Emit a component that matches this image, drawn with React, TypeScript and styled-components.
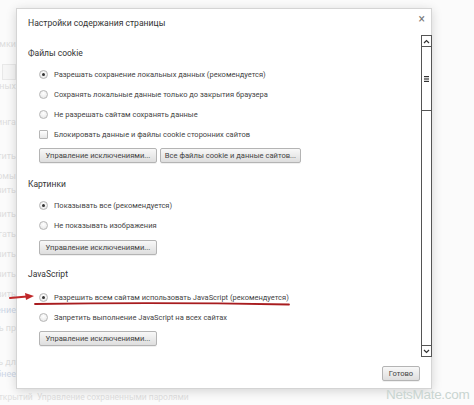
import React from "react";
import styled, { createGlobalStyle } from "styled-components";

const GlobalStyle = createGlobalStyle`
  html, body {
    margin: 0;
    padding: 0;
    background: #fbfbfb;
    font-family: Roboto, "Noto Sans", sans-serif;
  }
`;

const Page = styled.div`
  position: relative;
  width: 474px;
  height: 405px;
  overflow: hidden;
  background: #fbfbfb;
`;

// faded settings page behind the dialog, only its right edge peeks out
const BackPage = styled.div`
  width: 16px;
  overflow: hidden;
  display: flex;
  flex-direction: column;
  align-items: flex-end;
  padding-top: 30px;
`;

const BackLine = styled.div<{ $top: number; $blue?: boolean }>`
  margin-top: ${({ $top }) => $top}px;
  font-size: 9px;
  line-height: 12px;
  color: ${({ $blue }) => ($blue ? "#cdd6e6" : "#dedede")};
  white-space: nowrap;
`;

const BackBox = styled.div`
  margin-top: 14px;
  display: flex;
  gap: 2px;
  span {
    display: block;
    width: 12px;
    height: 14px;
    border: 1px solid #e8e8e8;
    background: #f6f6f6;
  }
`;

const BottomText = styled.div`
  position: absolute;
  left: -6px;
  top: 392px;
  font-size: 8.5px;
  color: #e0e0e0;
  white-space: nowrap;
`;

const Watermark = styled.div`
  position: absolute;
  left: 386px;
  top: 387px;
  font-family: "Liberation Sans", sans-serif;
  font-size: 13.5px;
  letter-spacing: -0.3px;
  color: #c9d5d1;
  white-space: nowrap;
`;

const Dialog = styled.div`
  position: absolute;
  left: 16px;
  top: 8px;
  width: 416px;
  height: 381px;
  box-sizing: border-box;
  background: #ffffff;
  border: 1px solid #d4d4d4;
  box-shadow: 0 2px 10px rgba(0, 0, 0, 0.16);
  display: flex;
  flex-direction: column;
`;

const Header = styled.div`
  height: 26px;
  display: flex;
  align-items: center;
  justify-content: space-between;
  padding: 0 6px 0 11px;
`;

const Title = styled.div`
  font-size: 8.6px;
  color: #333;
  padding-top: 1px;
`;

const Close = styled.div`
  font-size: 12px;
  color: #7a7a7a;
  line-height: 10px;
  margin-top: -6px;
`;

const Body = styled.div`
  display: flex;
  height: 322px;
`;

const Content = styled.div`
  flex: 1;
  padding: 11px 0 0 11px;
`;

const SectionTitle = styled.div<{ $mt?: number }>`
  margin-top: ${({ $mt }) => $mt || 0}px;
  font-size: 8.5px;
  line-height: 14px;
  color: #333;
`;

const Option = styled.div<{ $mt?: number }>`
  margin-top: ${({ $mt }) => $mt || 0}px;
  height: 20px;
  display: flex;
  align-items: center;
  padding-left: 11px;
  font-size: 7.5px;
  color: #444;
  white-space: nowrap;
`;

const Radio = styled.span<{ $on?: boolean }>`
  width: 9px;
  height: 9px;
  box-sizing: border-box;
  border-radius: 50%;
  border: 1px solid #b6b6b6;
  background: radial-gradient(circle at 50% 35%, #ffffff, #e3e3e3);
  margin-right: 6px;
  display: flex;
  align-items: center;
  justify-content: center;
  &::after {
    content: "";
    display: ${({ $on }) => ($on ? "block" : "none")};
    width: 3px;
    height: 3px;
    border-radius: 50%;
    background: #333;
  }
`;

const Check = styled.span`
  width: 9px;
  height: 9px;
  box-sizing: border-box;
  border: 1px solid #b6b6b6;
  border-radius: 1px;
  background: linear-gradient(#ffffff, #e6e6e6);
  margin-right: 6px;
`;

const Buttons = styled.div<{ $mt?: number }>`
  margin-top: ${({ $mt }) => $mt || 0}px;
  padding-left: 11px;
  display: flex;
  gap: 3px;
`;

const Button = styled.div<{ $w: number }>`
  width: ${({ $w }) => $w}px;
  height: 15px;
  box-sizing: border-box;
  border: 1px solid #b4b4b4;
  border-radius: 2px;
  background: linear-gradient(#f8f8f8, #dedede);
  box-shadow: 0 1px 0 rgba(0, 0, 0, 0.06);
  font-size: 7.6px;
  color: #444;
  display: flex;
  align-items: center;
  justify-content: center;
  white-space: nowrap;
`;

const Scrollbar = styled.div`
  width: 11px;
  margin-right: -1px;
  box-sizing: border-box;
  border: 1px solid #555;
  display: flex;
  flex-direction: column;
  background: #fff;
`;

const Arrow = styled.div`
  height: 10px;
  display: flex;
  align-items: center;
  justify-content: center;
`;

const Thumb = styled.div`
  height: 63px;
  border-top: 1px solid #555;
  border-bottom: 1px solid #555;
  display: flex;
  align-items: center;
  justify-content: center;
`;

const Track = styled.div`
  flex: 1;
  border-bottom: 1px solid #555;
`;

const Footer = styled.div`
  flex: 1;
  display: flex;
  justify-content: flex-end;
  align-items: flex-start;
  padding: 9px 11px 0 0;
`;

const Annotation = styled.svg`
  position: absolute;
  left: 0;
  top: 0;
  pointer-events: none;
`;

const backLines: { top: number; text: string; blue?: boolean }[] = [
  { top: 0, text: "Настройки данных" },
  { top: 24, text: "Защита от фишинга" },
  { top: 22, text: "Очистить" },
  { top: 8, text: "Пароли и формы" },
  { top: 2, text: "Отключить" },
  { top: 12, text: "Включить" },
  { top: 8, text: "Предлагать" },
  { top: 8, text: "Разрешить" },
  { top: 8, text: "Отключить" },
  { top: 8, text: "Отправить" },
  { top: 4, text: "Управление", blue: true },
  { top: 6, text: "Разрешить пр" },
  { top: 22, text: "Включить дл" },
  { top: 0, text: "Подробнее", blue: true },
];

const App = () => {
  return (
    <Page>
      <GlobalStyle />
      <BackPage>
        <BackLine $top={8}>Снимки</BackLine>
        <BackBox>
          <span />
          <span />
        </BackBox>
        {backLines.map((l, i) => (
          <BackLine key={i} $top={l.top} $blue={l.blue}>
            {l.text}
          </BackLine>
        ))}
      </BackPage>
      <BottomText>открытий &nbsp;Управление сохраненными паролями</BottomText>

      <Dialog>
        <Header>
          <Title>Настройки содержания страницы</Title>
          <Close>×</Close>
        </Header>
        <Body>
          <Content>
            <SectionTitle>Файлы cookie</SectionTitle>
            <Option $mt={4}>
              <Radio $on />
              Разрешать сохранение локальных данных (рекомендуется)
            </Option>
            <Option>
              <Radio />
              Сохранять локальные данные только до закрытия браузера
            </Option>
            <Option>
              <Radio />
              Не разрешать сайтам сохранять данные
            </Option>
            <Option>
              <Check />
              Блокировать данные и файлы cookie сторонних сайтов
            </Option>
            <Buttons $mt={4}>
              <Button $w={118}>Управление исключениями...</Button>
              <Button $w={141}>Все файлы cookie и данные сайтов...</Button>
            </Buttons>

            <SectionTitle $mt={14}>Картинки</SectionTitle>
            <Option $mt={4}>
              <Radio $on />
              Показывать все (рекомендуется)
            </Option>
            <Option>
              <Radio />
              Не показывать изображения
            </Option>
            <Buttons $mt={5}>
              <Button $w={118}>Управление исключениями...</Button>
            </Buttons>

            <SectionTitle $mt={12}>JavaScript</SectionTitle>
            <Option $mt={6}>
              <Radio $on />
              Разрешить всем сайтам использовать JavaScript (рекомендуется)
            </Option>
            <Option>
              <Radio />
              Запретить выполнение JavaScript на всех сайтах
            </Option>
            <Buttons $mt={4}>
              <Button $w={118}>Управление исключениями...</Button>
            </Buttons>
          </Content>
          <Scrollbar>
            <Arrow>
              <svg width="7" height="5" viewBox="0 0 7 5">
                <path d="M1 4 L3.5 1.5 L6 4" fill="none" stroke="#333" strokeWidth="1.2" />
              </svg>
            </Arrow>
            <Thumb>
              <svg width="5" height="6" viewBox="0 0 5 6">
                <rect x="0" y="0" width="5" height="1.2" fill="#333" />
                <rect x="0" y="2.4" width="5" height="1.2" fill="#333" />
                <rect x="0" y="4.8" width="5" height="1.2" fill="#333" />
              </svg>
            </Thumb>
            <Track />
            <Arrow>
              <svg width="7" height="5" viewBox="0 0 7 5">
                <path d="M1 1 L3.5 3.5 L6 1" fill="none" stroke="#333" strokeWidth="1.2" />
              </svg>
            </Arrow>
          </Scrollbar>
        </Body>
        <Footer>
          <Button $w={38}>Готово</Button>
        </Footer>
      </Dialog>

      <Watermark>NetsMate.com</Watermark>

      <Annotation width="474" height="405" viewBox="0 0 474 405">
        <path d="M10 298 L27 296.5" stroke="#c0282a" strokeWidth="2" strokeLinecap="round" />
        <path d="M25 293 L34 296 L26 300 Z" fill="#c0282a" />
        <path d="M35 304 Q160 302 289 304.5" stroke="#a81c1f" strokeWidth="1.8" fill="none" strokeLinecap="round" />
      </Annotation>
    </Page>
  );
};

export default App;
